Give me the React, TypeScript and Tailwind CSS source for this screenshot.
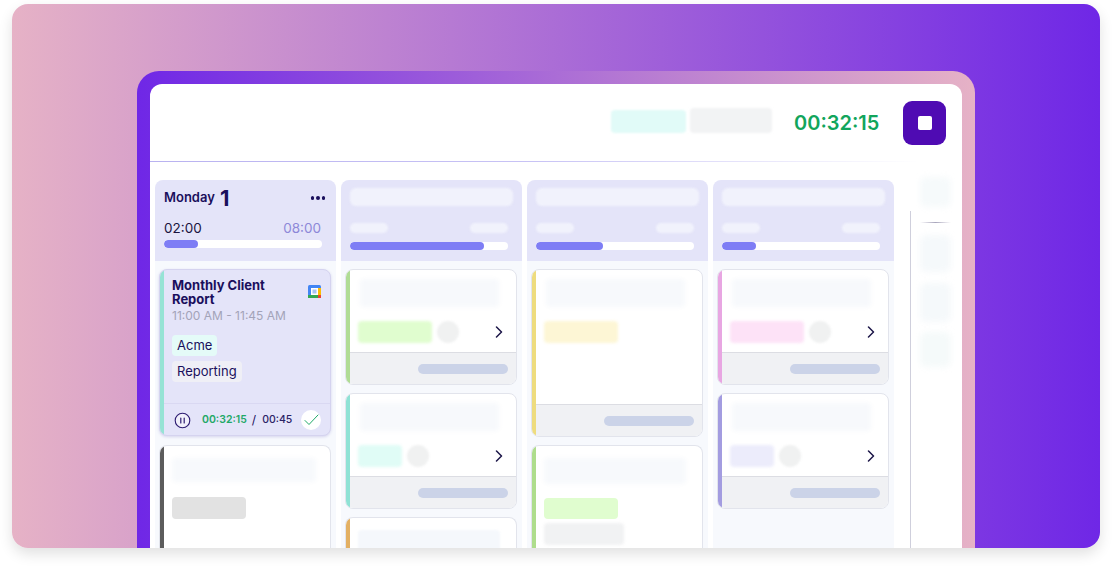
import React from "react";

const font = { fontFamily: "Inter, 'Liberation Sans', sans-serif" };

function Chevron() {
  return (
    <svg width="8" height="12" viewBox="0 0 8 12" fill="none" className="shrink-0">
      <path d="M1.5 1 L6.5 6 L1.5 11" stroke="#1c1648" strokeWidth="1.5" strokeLinecap="round" strokeLinejoin="round" />
    </svg>
  );
}

function CalIcon() {
  return (
    <svg width="13" height="13" viewBox="0 0 13 13" className="shrink-0">
      <rect x="0" y="0" width="13" height="13" rx="1.5" fill="#4285f4" />
      <rect x="0" y="10" width="10" height="3" fill="#34a853" />
      <rect x="10" y="3" width="3" height="7" fill="#fbbc04" />
      <rect x="10" y="10" width="3" height="3" fill="#ea4335" />
      <rect x="3" y="3" width="7" height="7" fill="#fff" />
      <rect x="4.5" y="4.5" width="4" height="4" fill="#a8c4f5" />
    </svg>
  );
}

function ColumnHeader({ fill }: { fill: number }) {
  return (
    <div className="h-[81px] shrink-0 rounded-t-lg bg-[#e4e4f9] pl-[9px] pr-[14px] pt-[8px]">
      <div className="mr-[-5px] h-[18px] rounded-md bg-[#f1f2fc] blur-[1px]" />
      <div className="mt-[17px] flex justify-between">
        <div className="h-[10px] w-[38px] rounded-full bg-[#f1f2fc] blur-[1px]" />
        <div className="h-[10px] w-[38px] rounded-full bg-[#f1f2fc] blur-[1px]" />
      </div>
      <div className="mt-[9px] h-[8px] overflow-hidden rounded-full bg-white">
        <div className="h-full rounded-full bg-[#7e7df5]" style={{ width: fill }} />
      </div>
    </div>
  );
}

function Card({
  stripe,
  pill,
  pillW,
  height,
  dot = true,
}: {
  stripe: string;
  pill: string;
  pillW: string;
  height: string;
  dot?: boolean;
}) {
  return (
    <div className={`flex shrink-0 overflow-hidden rounded-lg border border-[#e2e4ec] bg-white ${height}`}>
      <div className={`w-[4px] shrink-0 ${stripe}`} />
      <div className="flex min-w-0 flex-1 flex-col">
        <div className="flex flex-1 flex-col pl-[8px] pr-[9px] pt-[9px]">
          <div className="ml-[2px] mr-[8px] h-[28px] rounded bg-[#f7f9fc] blur-[2px]" />
          <div className="mt-[14px] flex items-center gap-[5px] pr-[4px]">
            <div className={`h-[22px] rounded-sm blur-[1.5px] ${pillW} ${pill}`} />
            {dot && <div className="h-[22px] w-[22px] rounded-full bg-[#f0f1f1] blur-[1px]" />}
            {dot && <div className="flex-1" />}
            {dot && <Chevron />}
          </div>
        </div>
        <div className="flex h-[32px] shrink-0 items-center justify-end border-t border-[#dcdde3] bg-[#f0f1f4] pr-[8px]">
          <div className="h-[10px] w-[90px] rounded-full bg-[#cbd3e8] blur-[0.5px]" />
        </div>
      </div>
    </div>
  );
}

function OpenCard({ stripe, children }: { stripe: string; children?: React.ReactNode }) {
  return (
    <div className="flex min-h-0 flex-1 overflow-hidden rounded-t-lg border border-b-0 border-[#e2e4ec] bg-white">
      <div className={`w-[4px] shrink-0 ${stripe}`} />
      <div className="flex min-w-0 flex-1 flex-col px-[8px] pt-[12px]">{children}</div>
    </div>
  );
}

function ActiveCard() {
  return (
    <div className="flex h-[167px] shrink-0 overflow-hidden rounded-lg border border-[#d5d3ef] bg-[#e4e4f9] shadow-[0_1px_3px_rgba(80,70,180,0.2)]">
      <div className="w-[4px] shrink-0 bg-[#96e3d5]" />
      <div className="flex min-w-0 flex-1 flex-col">
        <div className="flex-1 pl-[8px] pr-[9px] pt-[8px]">
          <div className="flex items-start justify-between">
            <div className="w-[110px] text-[13px] font-bold leading-[14px] text-[#1a0f5c]">Monthly Client Report</div>
            <div className="mt-[7px]">
              <CalIcon />
            </div>
          </div>
          <div className="mt-[1px] text-[12px] leading-[17px] text-[#a3a3b8]">11:00 AM - 11:45 AM</div>
          <div className="mt-[11px] flex flex-col items-start gap-[5px]">
            <div className="flex h-[21px] items-center rounded-sm bg-[#e4fbf8] px-[5px] text-[13px] text-[#1a0f5c]">Acme</div>
            <div className="flex h-[21px] items-center rounded-sm bg-[#efeff6] px-[5px] text-[13px] text-[#1a0f5c]">Reporting</div>
          </div>
        </div>
        <div className="flex h-[32px] shrink-0 items-center border-t border-[#d9d8f2] pl-[10px] pr-[9px] pt-[1px]">
          <svg width="17" height="17" viewBox="0 0 17 17" className="shrink-0">
            <circle cx="8.5" cy="8.5" r="7.3" fill="#f1f0fb" stroke="#2d1c72" strokeWidth="1.1" />
            <path d="M6.8 6v5M10.2 6v5" stroke="#2d1c72" strokeWidth="1.2" strokeLinecap="round" />
          </svg>
          <span className="ml-[11px] text-[10.5px] font-semibold text-[#1fa867]">00:32:15</span>
          <span className="ml-[5px] text-[12px] text-[#1a0f5c]">/</span>
          <span className="ml-[6px] text-[10.5px] font-medium text-[#2b2266]">00:45</span>
          <div className="ml-auto flex h-[20px] w-[20px] items-center justify-center rounded-full bg-white">
            <svg width="15" height="12" viewBox="0 0 15 12" fill="none">
              <path d="M1 6.5 L5 10.5 L14 1" stroke="#1fa867" strokeWidth="1" strokeLinecap="round" strokeLinejoin="round" />
            </svg>
          </div>
        </div>
      </div>
    </div>
  );
}

export default function App() {
  return (
    <div className="h-[568px] w-[1112px] overflow-hidden bg-white pl-[12px] pr-[12px] pt-[4px]" style={font}>
      <div className="h-[544px] w-[1088px] overflow-hidden rounded-2xl bg-linear-to-r/srgb from-[#e6b2c6] to-[#6f27e6] pl-[125px] pt-[67px] shadow-[0_6px_14px_rgba(0,0,0,0.12)]">
        <div className="h-[500px] w-[838px] rounded-t-[22px] bg-linear-to-r/srgb from-[#6f27e6] to-[#e6b2c6] px-[13px] pt-[13px]">
          <div className="flex h-[487px] w-[812px] flex-col overflow-hidden rounded-t-[12px] bg-white">
            {/* top bar */}
            <div className="flex h-[77px] shrink-0 items-center pr-[16px]">
              <div className="flex-1" />
              <div className="mt-[-2px] h-[23px] w-[75px] rounded bg-[#e1fbf8] blur-[1px]" />
              <div className="ml-[4px] mt-[-4px] h-[25px] w-[82px] rounded bg-[#f2f3f4] blur-[1px]" />
              <div className="ml-[22px] w-[86px] whitespace-nowrap text-[20px] font-semibold leading-none text-[#12a55c]">00:32:15</div>
              <div className="ml-[23px] mt-[1px] flex h-[44px] w-[43px] items-center justify-center rounded-[9px] bg-[#4f0bb3]">
                <div className="h-[14px] w-[14px] rounded-[2px] bg-white" />
              </div>
            </div>
            <div className="h-[1px] w-[770px] shrink-0 bg-linear-to-r/srgb from-[#b9b2f0] via-[#c8c3f5] to-transparent" />

            {/* board */}
            <div className="flex min-h-0 flex-1 pl-[5px] pt-[18px]">
              <div className="flex w-[739px] shrink-0 gap-[5px]">
                {/* Monday */}
                <div className="flex w-[181px] shrink-0 flex-col">
                  <div className="h-[81px] shrink-0 rounded-t-lg bg-[#e4e4f9] pl-[9px] pr-[14px] pt-[7px]">
                    <div className="flex h-[22px] items-center justify-between">
                      <div className="flex items-center gap-[5px]">
                        <span className="text-[13px] font-semibold text-[#1a0f5c]">Monday</span>
                        <span className="text-[22px] font-bold leading-none text-[#1a0f5c]">1</span>
                      </div>
                      <div className="mr-[-3px] flex gap-[2px]">
                        <span className="h-[3.5px] w-[3.5px] rounded-full bg-[#1a0f5c]" />
                        <span className="h-[3.5px] w-[3.5px] rounded-full bg-[#1a0f5c]" />
                        <span className="h-[3.5px] w-[3.5px] rounded-full bg-[#1a0f5c]" />
                      </div>
                    </div>
                    <div className="mt-[11px] flex justify-between pr-[1px] text-[13.5px] leading-[17px]">
                      <span className="text-[#1a1440]">02:00</span>
                      <span className="text-[#8d88d8]">08:00</span>
                    </div>
                    <div className="mt-[3px] h-[8px] overflow-hidden rounded-full bg-white">
                      <div className="h-full rounded-full bg-[#7e7df5]" style={{ width: 34 }} />
                    </div>
                  </div>
                  <div className="flex min-h-0 flex-1 flex-col gap-[9px] bg-[#f7f9fd] pl-[4px] pr-[5px] pt-[8px]">
                    <ActiveCard />
                    <OpenCard stripe="bg-[#5c5c5c]">
                      <div className="mr-[6px] h-[24px] rounded bg-[#f7f9fc] blur-[2px]" />
                      <div className="mt-[15px] h-[22px] w-[74px] rounded bg-[#e2e2e2] blur-[0.5px]" />
                    </OpenCard>
                  </div>
                </div>

                {/* col 2 */}
                <div className="flex w-[181px] shrink-0 flex-col">
                  <ColumnHeader fill={134} />
                  <div className="flex min-h-0 flex-1 flex-col gap-[8px] bg-[#f7f9fd] pl-[4px] pr-[5px] pt-[8px]">
                    <Card stripe="bg-[#b0dc95]" pill="bg-[#e0fdcf]" pillW="w-[74px]" height="h-[116px]" />
                    <Card stripe="bg-[#8fe2d5]" pill="bg-[#e0fcf6]" pillW="w-[44px]" height="h-[116px]" />
                    <OpenCard stripe="bg-[#e3b063]">
                      <div className="mr-[8px] h-[26px] rounded bg-[#f5f8fc] blur-[1px]" />
                    </OpenCard>
                  </div>
                </div>

                {/* col 3 */}
                <div className="flex w-[181px] shrink-0 flex-col">
                  <ColumnHeader fill={67} />
                  <div className="flex min-h-0 flex-1 flex-col gap-[8px] bg-[#f7f9fd] pl-[4px] pr-[5px] pt-[8px]">
                    <Card stripe="bg-[#eedc7e]" pill="bg-[#fdf6d5]" pillW="w-[74px]" height="h-[168px]" dot={false} />
                    <OpenCard stripe="bg-[#aedd8c]">
                      <div className="mr-[8px] h-[26px] rounded bg-[#f7f9fc] blur-[2px]" />
                      <div className="mt-[14px] h-[21px] w-[74px] rounded-sm bg-[#e0fdcf] blur-[0.5px]" />
                      <div className="mt-[4px] h-[22px] w-[80px] rounded bg-[#f1f2f3] blur-[1.5px]" />
                    </OpenCard>
                  </div>
                </div>

                {/* col 4 */}
                <div className="flex w-[181px] shrink-0 flex-col">
                  <ColumnHeader fill={34} />
                  <div className="flex min-h-0 flex-1 flex-col gap-[8px] bg-[#f7f9fd] pl-[4px] pr-[5px] pt-[8px]">
                    <Card stripe="bg-[#e8a6e2]" pill="bg-[#fde2f7]" pillW="w-[74px]" height="h-[116px]" />
                    <Card stripe="bg-[#a39ce0]" pill="bg-[#ececfb]" pillW="w-[44px]" height="h-[116px]" />
                  </div>
                </div>
              </div>

              {/* right rail */}
              <div className="ml-[16px] mt-[31px] w-px shrink-0 bg-[#cfcfdc]" />
              <div className="ml-[9px] mt-[-3px] flex w-[31px] shrink-0 flex-col">
                <div className="h-[30px] rounded-md bg-[#f6fafb] blur-[3px]" />
                <div className="mt-[15px] h-[1px] bg-linear-to-r/srgb from-transparent via-[#a9a6bc] to-transparent" />
                <div className="mt-[12px] h-[37px] rounded-md bg-[#f5f9fb] blur-[3px]" />
                <div className="mt-[11px] h-[39px] rounded-md bg-[#f5f9fb] blur-[3px]" />
                <div className="mt-[10px] h-[35px] rounded-md bg-[#f5fafa] blur-[3px]" />
              </div>
            </div>
          </div>
        </div>
      </div>
    </div>
  );
}
